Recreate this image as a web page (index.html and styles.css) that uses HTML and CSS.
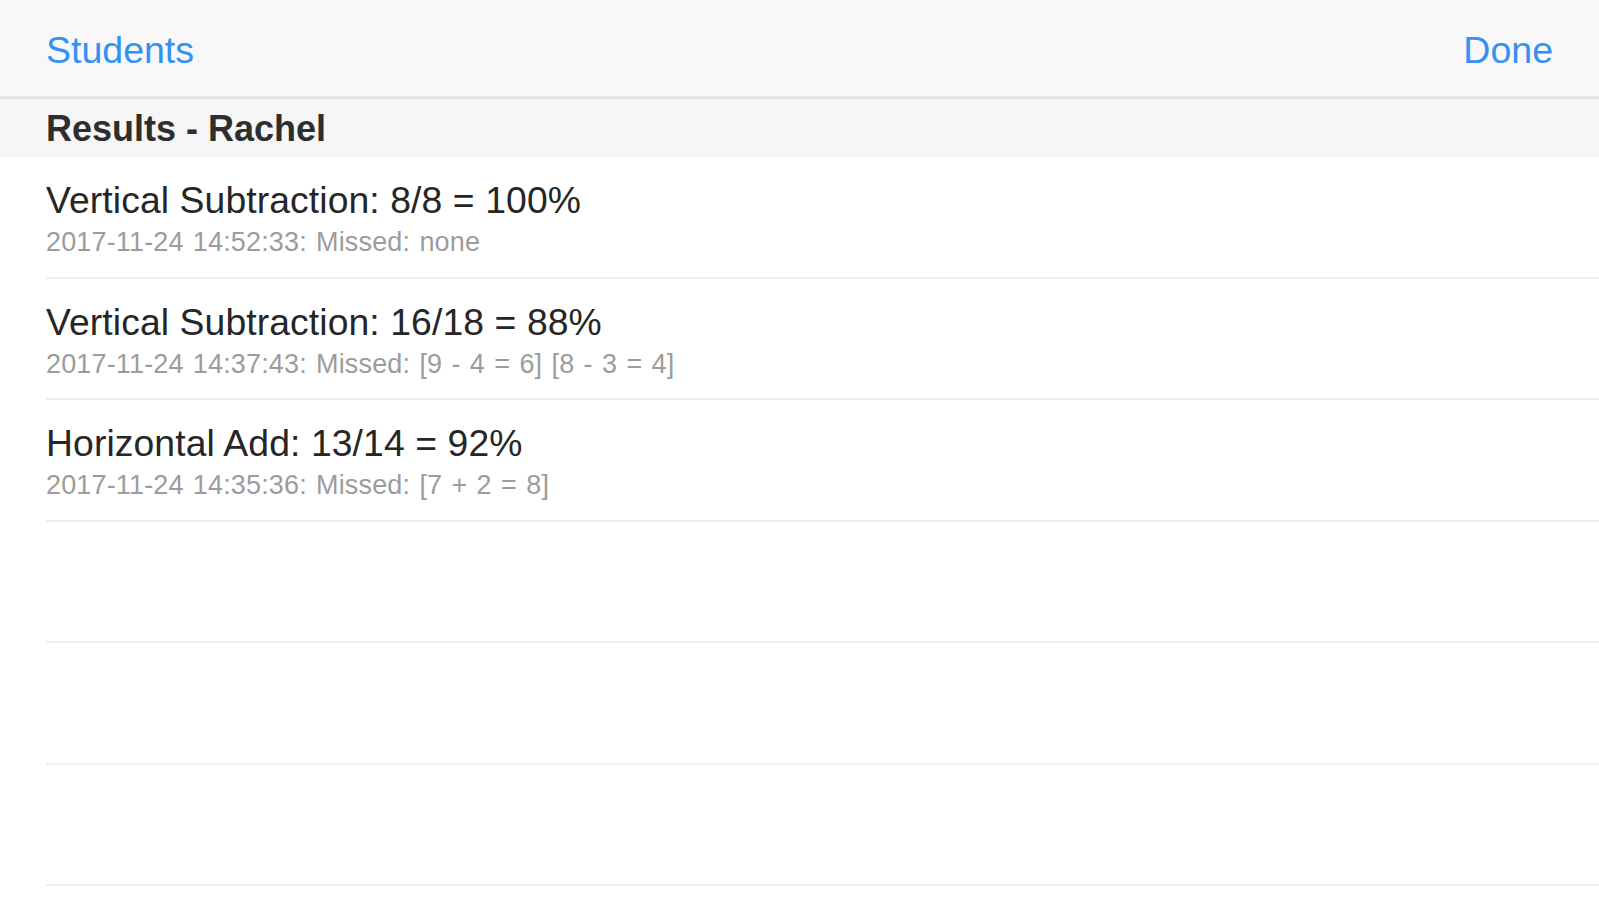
FILE: index.html
```html
<!DOCTYPE html>
<html>
<head>
<meta charset="utf-8">
<link rel="stylesheet" href="styles.css">
</head>
<body>
<div class="app">
  <header class="navbar">
    <span class="nav-btn">Students</span>
    <span class="nav-btn">Done</span>
  </header>
  <div class="section-header">Results - Rachel</div>
  <ul class="list">
    <li class="row">
      <div class="title">Vertical Subtraction: 8/8 = 100%</div>
      <div class="subtitle">2017-11-24 14:52:33: Missed: none</div>
    </li>
    <li class="row">
      <div class="title">Vertical Subtraction: 16/18 = 88%</div>
      <div class="subtitle">2017-11-24 14:37:43: Missed: [9 - 4 = 6] [8 - 3 = 4]</div>
    </li>
    <li class="row">
      <div class="title">Horizontal Add: 13/14 = 92%</div>
      <div class="subtitle">2017-11-24 14:35:36: Missed: [7 + 2 = 8]</div>
    </li>
    <li class="row empty"></li>
    <li class="row empty"></li>
    <li class="row empty"></li>
  </ul>
</div>
</body>
</html>
```

FILE: styles.css
```css
html, body {
  margin: 0;
  padding: 0;
  background: #ffffff;
  font-family: "Liberation Sans", Arial, sans-serif;
  overflow: hidden;
}

.app {
  width: 1599px;
  height: 900px;
  display: flex;
  flex-direction: column;
  background: #ffffff;
}

.navbar {
  height: 90px;
  flex: none;
  display: flex;
  align-items: center;
  justify-content: space-between;
  padding: 6px 46px 0 46px;
  background: #f8f8f8;
  border-bottom: 3px solid #e3e3e3;
  box-sizing: content-box;
}

.nav-btn {
  font-size: 37.5px;
  color: #3490f2;
  line-height: 1;
}

.section-header {
  height: 56px;
  flex: none;
  display: flex;
  align-items: center;
  padding-left: 46px;
  padding-top: 2px;
  background: #f6f6f6;
  font-size: 36px;
  font-weight: bold;
  color: #2e2e2e;
}

.list {
  list-style: none;
  margin: 0;
  padding: 0;
}

.row {
  margin-left: 46px;
  border-bottom: 2px solid #efefef;
  padding-top: 23px;
  box-sizing: border-box;
  height: 121.5px;
}

.title {
  font-size: 37.3px;
  color: #262626;
  line-height: 41px;
  letter-spacing: 0.1px;
}

.subtitle {
  margin-top: 6px;
  font-size: 27px;
  color: #9c9c9c;
  line-height: 30px;
  letter-spacing: 0.15px;
  word-spacing: 1.6px;
}
```
